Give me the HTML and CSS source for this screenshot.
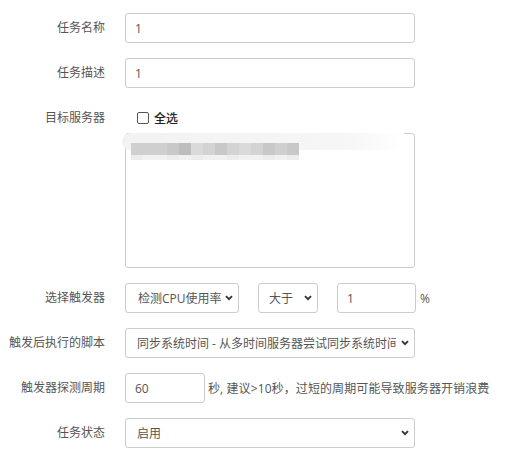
FILE: index.html
```html
<!DOCTYPE html>
<html lang="zh-CN">
<head>
<meta charset="utf-8">
<title>任务</title>
<link rel="stylesheet" href="styles.css">
</head>
<body>
<form class="form">
  <div class="row">
    <label class="label">任务名称</label>
    <div class="ctrl"><input class="input wide" type="text" value="1"></div>
  </div>
  <div class="row">
    <label class="label">任务描述</label>
    <div class="ctrl"><input class="input wide" type="text" value="1"></div>
  </div>
  <div class="row">
    <label class="label">目标服务器</label>
    <div class="ctrl">
      <div class="checkall"><input type="checkbox" class="cb"><span class="cb-text">全选</span></div>
      <div class="servers">
        <div class="shade"></div>
        <div class="pix">
          <span class="px p2"></span><span class="px p2"></span><span class="px p2"></span><span class="px p3"></span><span class="px p1"></span><span class="px p4"></span><span class="px p5"></span><span class="px p3"></span><span class="px p5"></span><span class="px p4"></span><span class="px p5"></span><span class="px p3"></span><span class="px p2"></span><span class="px p3"></span>
        </div>
        <div class="pix low">
          <span class="px l1"></span><span class="px l2"></span><span class="px l2"></span><span class="px l1"></span><span class="px l2"></span><span class="px l1"></span><span class="px l2"></span><span class="px l2"></span><span class="px l1"></span><span class="px l2"></span><span class="px l2"></span><span class="px l1"></span><span class="px l2"></span><span class="px l1"></span>
        </div>
      </div>
    </div>
  </div>
  <div class="row">
    <label class="label">选择触发器</label>
    <div class="ctrl inline">
      <span class="sel s1"><select><option>检测CPU使用率</option></select><svg class="chev" width="8" height="6" viewBox="0 0 8 6"><path d="M1 1.2 L4 4.2 L7 1.2" fill="none" stroke="#333" stroke-width="1.9"/></svg></span>
      <span class="sel s2"><select><option>大于</option></select><svg class="chev" width="8" height="6" viewBox="0 0 8 6"><path d="M1 1.2 L4 4.2 L7 1.2" fill="none" stroke="#333" stroke-width="1.9"/></svg></span>
      <input class="input pct" type="text" value="1"><span class="unit">%</span>
    </div>
  </div>
  <div class="row">
    <label class="label">触发后执行的脚本</label>
    <div class="ctrl">
      <span class="sel full"><select><option>同步系统时间 - 从多时间服务器尝试同步系统时间</option></select><svg class="chev" width="8" height="6" viewBox="0 0 8 6"><path d="M1 1.2 L4 4.2 L7 1.2" fill="none" stroke="#333" stroke-width="1.9"/></svg></span>
    </div>
  </div>
  <div class="row">
    <label class="label">触发器探测周期</label>
    <div class="ctrl inline">
      <input class="input period" type="text" value="60"><span class="hint">秒, 建议&gt;10秒，过短的周期可能导致服务器开销浪费</span>
    </div>
  </div>
  <div class="row">
    <label class="label">任务状态</label>
    <div class="ctrl">
      <span class="sel full"><select><option>启用</option></select><svg class="chev" width="8" height="6" viewBox="0 0 8 6"><path d="M1 1.2 L4 4.2 L7 1.2" fill="none" stroke="#333" stroke-width="1.9"/></svg></span>
    </div>
  </div>
</form>
</body>
</html>
```
FILE: styles.css
```css
html, body {
  margin: 0;
  padding: 0;
  background: #fff;
}
body {
  font-family: "Open Sans", "Noto Sans CJK SC", sans-serif;
  font-size: 12px;
  color: #555;
}
.form {
  padding-top: 13px;
  margin: 0;
}
.row {
  display: grid;
  grid-template-columns: 105px 1fr;
  column-gap: 20px;
  margin-bottom: 15px;
  align-items: start;
}
.label {
  text-align: right;
  line-height: 30px;
  height: 30px;
  color: #555;
  white-space: nowrap;
}
.ctrl {
  min-width: 0;
}
.inline {
  display: flex;
  align-items: center;
}
.input {
  box-sizing: border-box;
  height: 30px;
  border: 1px solid #ccc;
  border-radius: 3px;
  padding: 0 9px;
  font: inherit;
  color: #555;
  background: #fff;
  outline: none;
  margin: 0;
}
.wide { width: 290px; }
.pct { width: 79px; margin-left: 19px; }
.unit { margin-left: 4px; color: #555; }
.period { width: 80px; }
.hint { margin-left: 3px; color: #555; white-space: nowrap; letter-spacing: 0.1px; }

.checkall {
  height: 30px;
  display: flex;
  align-items: center;
  padding-left: 12px;
}
.cb {
  appearance: none;
  -webkit-appearance: none;
  box-sizing: border-box;
  width: 12px;
  height: 12px;
  margin: 0;
  border: 1px solid #555;
  border-radius: 2px;
  background: #fff;
}
.cb-text {
  margin-left: 5px;
  color: #222;
  font-weight: 500;
}
.servers {
  position: relative;
  box-sizing: border-box;
  width: 290px;
  height: 135px;
  border: 1px solid #ccc;
  border-radius: 3px;
  padding-top: 9px;
  padding-left: 5px;
}
.shade {
  position: absolute;
  left: -4px;
  top: -1px;
  width: 282px;
  height: 17px;
  border-radius: 9px 0 0 9px;
  background: linear-gradient(to right, #f2f2f2, #f6f6f6 80%, #fff);
}
.pix {
  position: relative;
  display: flex;
  height: 12px;
}
.pix.low { height: 5px; }
.px { width: 12px; height: 100%; }
.p1 { background: #bdbdbd; }
.p2 { background: #cfcfcf; }
.p3 { background: #c8c8c8; }
.p4 { background: #dadada; }
.p5 { background: #d3d3d3; }
.l1 { background: #ececec; }
.l2 { background: #f1f1f1; }

.sel {
  position: relative;
  display: inline-block;
  height: 30px;
}
.sel select {
  appearance: none;
  -webkit-appearance: none;
  box-sizing: border-box;
  height: 30px;
  border: 1px solid #ccc;
  border-radius: 3px;
  background: #fff;
  font: inherit;
  color: #555;
  padding: 0 18px 0 11px;
  margin: 0;
  outline: none;
  width: 100%;
}
.s1 { width: 114px; }
.s1 select { padding-left: 12px; padding-right: 16px; }
.s2 { width: 60px; margin-left: 19px; }
.s2 select { padding-left: 10px; }
.full { width: 290px; }
.chev {
  position: absolute;
  right: 6px;
  top: 12px;
  pointer-events: none;
}
```
